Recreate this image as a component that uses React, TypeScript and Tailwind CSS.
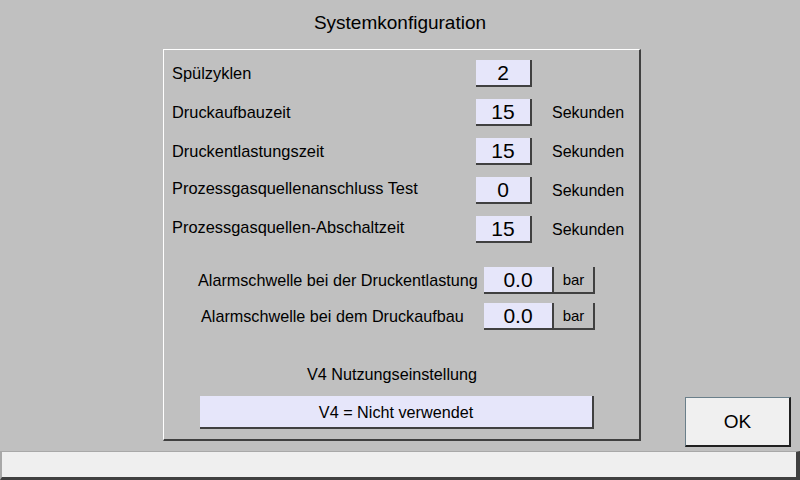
const font = { fontFamily: '"Liberation Sans", Arial, sans-serif' };

function Field({ value, w = "w-[56px]" }: { value: string; w?: string }) {
  return (
    <div
      className={`${w} h-[27px] bg-[#e6e6fa] border-r-2 border-b-2 border-[#404040] flex items-center justify-center text-[21px] leading-none text-black`}
    >
      {value}
    </div>
  );
}

function TimeRow({ label, value, unit, lift }: { label: string; value: string; unit?: string; lift?: boolean }) {
  return (
    <div className="flex items-center h-[27px]">
      <div className={`w-[304px] text-[16.4px] leading-none ${lift ? "pb-[5px]" : ""}`}>{label}</div>
      <Field value={value} />
      {unit && <div className="ml-[20px] text-[16px] leading-none">{unit}</div>}
    </div>
  );
}

function AlarmRow({ label, pl }: { label: string; pl: string }) {
  return (
    <div className="flex items-center h-[27px]">
      <div className={`w-[312px] ${pl} text-[16.2px] leading-none whitespace-nowrap`}>{label}</div>
      <Field value="0.0" w="w-[70px]" />
      <div className="w-[41px] h-[27px] border-r-2 border-b-2 border-[#404040] flex items-center justify-center text-[15px] leading-none">
        bar
      </div>
    </div>
  );
}

export default function App() {
  return (
    <div className="w-[800px] h-[480px] bg-[#c0c0c0] flex flex-col text-black" style={font}>
      {/* Titel */}
      <div className="h-[49px] flex justify-center pt-[13px] text-[19px] leading-none">Systemkonfiguration</div>

      <div className="flex-1 flex">
        {/* Einstellungen */}
        <div className="ml-[163px] w-[478px] h-[392px] border-t border-l border-white border-r-2 border-b-2 border-r-[#404040] border-b-[#404040] pl-[8px] pt-[10px] flex flex-col">
          <div className="flex flex-col gap-[12px]">
            <TimeRow label="Spülzyklen" value="2" />
            <TimeRow label="Druckaufbauzeit" value="15" unit="Sekunden" />
            <TimeRow label="Druckentlastungszeit" value="15" unit="Sekunden" />
            <TimeRow label="Prozessgasquellenanschluss Test" value="0" unit="Sekunden" lift />
            <TimeRow label="Prozessgasquellen-Abschaltzeit" value="15" unit="Sekunden" lift />
          </div>
          <div className="mt-[24px] flex flex-col gap-[9px]">
            <AlarmRow label="Alarmschwelle bei der Druckentlastung" pl="pl-[26px]" />
            <AlarmRow label="Alarmschwelle bei dem Druckaufbau" pl="pl-[29px]" />
          </div>
          <div className="mt-[36px] w-[440px] text-center text-[16.2px] leading-none">V4 Nutzungseinstellung</div>
          <div className="mt-[14px] ml-[28px] w-[394px] h-[33px] bg-[#e6e6fa] border-r-2 border-b-2 border-[#404040] flex items-center justify-center text-[16.2px] leading-none">
            V4 = Nicht verwendet
          </div>
        </div>

        {/* OK */}
        <button className="ml-auto mr-[9px] mb-[4px] self-end w-[106px] h-[50px] bg-[#f0f0f0] border-t border-l border-[#6a7f8a] border-r-2 border-b-2 border-r-[#202020] border-b-[#202020] text-[19px] leading-none">
          OK
        </button>
      </div>

      {/* Statusleiste */}
      <div className="h-[29px] bg-[#efefef] border-t border-l-2 border-[#a8a8a8] border-r-[4px] border-b-[3px] border-r-[#404040] border-b-[#404040]" />
    </div>
  );
}
